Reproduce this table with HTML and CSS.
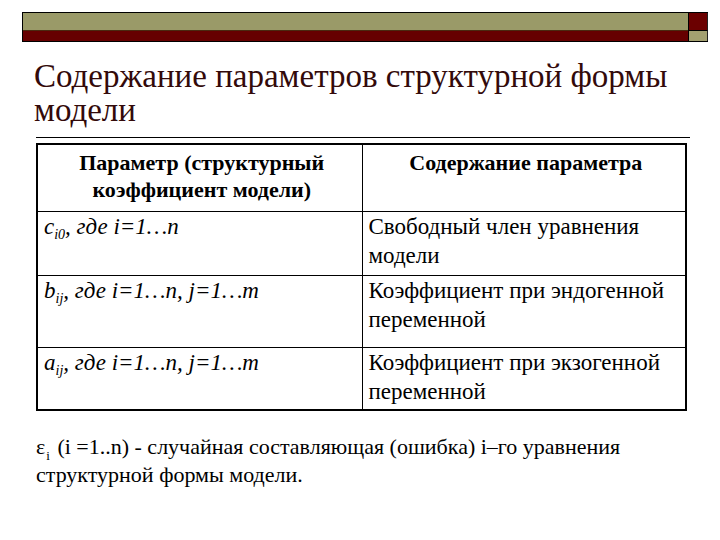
FILE: index.html
```html
<!DOCTYPE html>
<html>
<head>
<meta charset="utf-8">
<link rel="stylesheet" href="styles.css">
</head>
<body>
<main class="page">
  <div class="topbar">
    <div class="bar-olive"></div>
    <div class="sq-maroon"></div>
    <div class="bar-maroon"></div>
    <div class="sq-olive"></div>
  </div>
  <h1 class="heading">Содержание параметров структурной формы<br>модели</h1>
  <div class="rule"></div>
  <table class="params">
    <colgroup><col class="c1"><col class="c2"></colgroup>
    <tr class="head">
      <th class="hc">Параметр (структурный коэффициент модели)</th>
      <th class="hc">Содержание параметра</th>
    </tr>
    <tr class="r1">
      <td class="cell"><i class="sym">c<sub class="ix">i0</sub>, где i=1…n</i></td>
      <td class="cell">Свободный член уравнения модели</td>
    </tr>
    <tr class="r2">
      <td class="cell"><i class="sym">b<sub class="ix">ij</sub>, где i=1…n, j=1…m</i></td>
      <td class="cell">Коэффициент при эндогенной переменной</td>
    </tr>
    <tr class="r3">
      <td class="cell"><i class="sym">a<sub class="ix">ij</sub>, где i=1…n, j=1…m</i></td>
      <td class="cell">Коэффициент при экзогенной переменной</td>
    </tr>
  </table>
  <p class="note">ε<sub class="nix">i</sub> (i =1..n) - случайная составляющая (ошибка) i–го уравнения структурной формы модели.</p>
</main>
</body>
</html>
```

FILE: styles.css
```css
body {
  margin: 0;
  background: #ffffff;
  font-family: "Liberation Serif", Tinos, "Times New Roman", serif;
}
.page {
  display: block;
  width: 720px;
  height: 540px;
  overflow: hidden;
  color: #000;
  font-family: "Liberation Serif", Tinos, "Times New Roman", serif;
}
.heading, .hc, .cell, .sym, .note {
  font-family: "Liberation Serif", Tinos, "Times New Roman", serif;
}
.topbar {
  display: grid;
  grid-template-columns: 665px 20px;
  grid-template-rows: 18px 10px;
  margin: 12px 0 0 22px;
  width: 685px;
  border-top: 1px solid #000;
  border-bottom: 1px solid #000;
  border-left: 1px solid #000;
}
.bar-olive {
  background: #9a9a68;
  border-bottom: 1px solid #4a2a10;
}
.bar-maroon {
  background: #660000;
}
.sq-maroon {
  background: #6b0000;
  border-left: 1px solid #000;
  border-right: 1px solid #222;
  border-bottom: 1px solid #000;
}
.sq-olive {
  background: #a3a070;
  border-left: 1px solid #000;
  border-right: 1px solid #222;
}
.heading {
  margin: 17px 0 0 34px;
  width: 660px;
  white-space: nowrap;
  font-weight: normal;
  font-size: 33px;
  line-height: 34px;
  color: #330a0a;
}
.rule {
  margin: 10px 0 0 36px;
  width: 654px;
  height: 1px;
  background: #000;
}
.params {
  margin: 5px 0 0 36px;
  width: 649px;
  border-collapse: collapse;
  border: 2px solid #000;
  table-layout: fixed;
}
.c1 { width: 325px; }
.c2 { width: 324px; }
.cell, .hc {
  border: 1px solid #000;
  vertical-align: top;
  font-size: 23px;
  line-height: 29px;
  padding: 0 2px 0 6px;
  text-align: left;
}
.hc {
  text-align: center;
  font-weight: bold;
  font-size: 22px;
  line-height: 27px;
  padding-top: 4px;
}
.head { height: 67px; }
.r1 { height: 64px; }
.r2 { height: 72px; }
.r3 { height: 63px; }
.ix {
  font-size: 14px;
  line-height: 0;
  vertical-align: -5px;
}
.note {
  margin: 22px 0 0 36px;
  width: 660px;
  font-size: 22px;
  line-height: 28px;
}
.nix {
  font-size: 13px;
  line-height: 0;
  vertical-align: -6px;
  margin-left: 1px;
  margin-right: 2px;
}
```
